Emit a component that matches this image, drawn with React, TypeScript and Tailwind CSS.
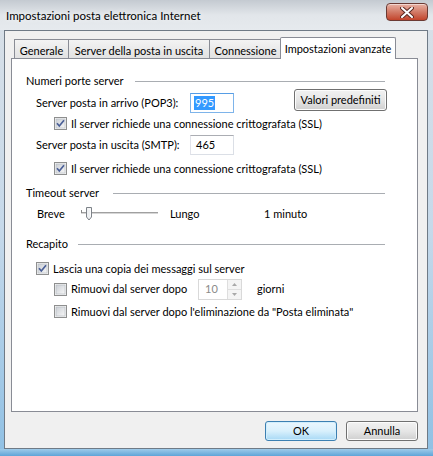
import React from "react";

function Check({ checked = false }: { checked?: boolean }) {
  return (
    <svg width="13" height="13" viewBox="0 0 13 13" className="shrink-0">
      <defs>
        <linearGradient id="cbg" x1="0" y1="0" x2="1" y2="1">
          <stop offset="0" stopColor="#cbcfd5" />
          <stop offset="1" stopColor="#f7f7f7" />
        </linearGradient>
      </defs>
      <rect x="0.5" y="0.5" width="12" height="12" fill="#f4f4f4" stroke="#8e8f8f" />
      <rect x="2" y="2" width="9" height="9" fill="url(#cbg)" stroke="#b3b8bf" strokeWidth="0.6" />
      {checked && (
        <path d="M3 6.3 L5.3 9 L10 3.2" fill="none" stroke="#4a5f97" strokeWidth="1.7" />
      )}
    </svg>
  );
}

function CheckRow({ checked, label, indent }: { checked?: boolean; label: string; indent: string }) {
  return (
    <div className={`flex items-center h-[13px] gap-[4px] ${indent}`}>
      <Check checked={checked} />
      <span className="leading-none whitespace-nowrap">{label}</span>
    </div>
  );
}

function GroupLabel({ text, labelWidth, mt }: { text: string; labelWidth: string; mt: string }) {
  return (
    <div className={`flex items-center h-[16px] pl-[14px] pr-[32px] ${mt}`}>
      <span className={`whitespace-nowrap ${labelWidth}`}>{text}</span>
      <div className="flex-1 h-px bg-[#a9adb2]" />
    </div>
  );
}

function Tab({ label, width, active }: { label: string; width: string; active?: boolean }) {
  if (active) {
    return (
      <div
        className={`${width} h-[22px] -mb-px -mx-[1px] z-10 bg-white border border-b-0 border-[#898c95] rounded-t-[2px] flex justify-center pt-[3px] whitespace-nowrap`}
      >
        {label}
      </div>
    );
  }
  return (
    <div
      className={`${width} h-[19px] border border-b-0 border-[#898c95] bg-gradient-to-b from-[#f3f3f3] to-[#e2e2e2] flex justify-center pt-[3px] -mr-px whitespace-nowrap`}
    >
      {label}
    </div>
  );
}

export default function App() {
  return (
    <div className="w-[433px] h-[456px] overflow-hidden flex flex-col font-['Lato',sans-serif] text-[11px] text-black bg-gradient-to-b from-[#d9e0e7] via-[#c6d9ea] to-[#8fc0e4]">
      {/* title bar */}
      <div className="h-[30px] flex justify-between bg-gradient-to-b from-[#c4cad1] via-[#e2e6ea] to-[#e6eaee]">
        <span className="pl-[6px] pt-[8px] text-[11.5px] leading-[16px] whitespace-nowrap [text-shadow:0_0_6px_#ffffff]">
          Impostazioni posta elettronica Internet
        </span>
        <div className="mt-[3px] mr-[5px] w-[42px] h-[18px] rounded-[4px] border border-[#6b3a33] bg-gradient-to-b from-[#e8b1a4] via-[#d27a66] to-[#c2432a] flex items-center justify-center shadow-[inset_0_1px_0_rgba(255,255,255,0.5)]">
          <svg width="14" height="11" viewBox="0 0 14 11">
            <path d="M2 1 L12 10 M12 1 L2 10" stroke="#5b2a22" strokeWidth="4" strokeLinecap="round" />
            <path d="M2 1 L12 10 M12 1 L2 10" stroke="#ffffff" strokeWidth="2" strokeLinecap="round" />
          </svg>
        </div>
      </div>

      {/* client area */}
      <div className="ml-[4px] mr-[5px] h-[419px] border border-[#6f7a86] bg-[#f0f0f0] pl-[6px] pr-[9px] pt-[6px] flex flex-col">
        <div className="flex items-end h-[21px] pl-[3px]">
          <Tab label="Generale" width="w-[55px]" />
          <Tab label="Server della posta in uscita" width="w-[142px]" />
          <Tab label="Connessione" width="w-[73px]" />
          <Tab label="Impostazioni avanzate" width="w-[116px]" active />
        </div>

        <div className="h-[354px] border border-[#898c95] bg-white flex flex-col">
          <GroupLabel text="Numeri porte server" labelWidth="w-[109px]" mt="mt-[14px]" />

          <div className="flex items-start h-[24px] pl-[24px]">
            <span className="w-[154px] h-[20px] mt-[4px] flex items-center whitespace-nowrap">
              Server posta in arrivo (POP3):
            </span>
            <div className="w-[44px] h-[20px] mt-[4px] border border-[#7eb4ea] border-t-[#569de5] bg-white flex items-center pl-[3px]">
              <span className="bg-[#3399ff] text-white leading-[14px] px-[1px]">995</span>
            </div>
            <button className="ml-[60px] w-[93px] h-[22px] rounded-[3px] border border-[#707070] bg-gradient-to-b from-[#f2f2f2] via-[#e6e6e6] to-[#cfcfcf] shadow-[inset_0_0_0_1px_#fcfcfc] flex items-center justify-center">
              Valori predefiniti
            </button>
          </div>

          <CheckRow checked label="Il server richiede una connessione crittografata (SSL)" indent="ml-[42px] mt-[4px]" />

          <div className="flex items-center h-[20px] pl-[24px] mt-[5px]">
            <span className="w-[154px] whitespace-nowrap">Server posta in uscita (SMTP):</span>
            <div className="w-[44px] h-[20px] border border-[#dbdfe6] border-t-[#abadb3] border-l-[#e2e3ea] bg-white flex items-center pl-[5px]">
              465
            </div>
          </div>

          <CheckRow checked label="Il server richiede una connessione crittografata (SSL)" indent="ml-[42px] mt-[7px]" />

          <GroupLabel text="Timeout server" labelWidth="w-[87px]" mt="mt-[10px]" />

          <div className="flex items-center h-[16px] mt-[5px] pl-[25px]">
            <span className="w-[44px]">Breve</span>
            <svg width="78" height="16" viewBox="0 0 78 16" className="shrink-0">
              <rect x="0" y="6" width="77" height="2" fill="#d6d6d6" />
              <rect x="0" y="6" width="77" height="1" fill="#a0a0a0" />
              <path d="M0.5 4 V7" stroke="#8a8a8a" />
              <path d="M5.5 1.5 H10.5 V11 L8 14 L5.5 11 Z" fill="#eef0f2" stroke="#7d8288" />
              <path d="M6.5 3 H9.5 V10.5" fill="none" stroke="#ffffff" strokeWidth="0.8" />
            </svg>
            <span className="ml-[11px] w-[94px]">Lungo</span>
            <span>1 minuto</span>
          </div>

          <GroupLabel text="Recapito" labelWidth="w-[52px]" mt="mt-[14px]" />

          <CheckRow checked label="Lascia una copia dei messaggi sul server" indent="ml-[24px] mt-[10px]" />

          <div className="flex items-center h-[21px] mt-[4px] pl-[42px]">
            <div className="flex items-center gap-[4px] w-[144px]">
              <Check />
              <span className="whitespace-nowrap">Rimuovi dal server dopo</span>
            </div>
            <div className="w-[44px] h-[21px] border border-[#d9d9d9] bg-white flex items-center">
              <span className="flex-1 pl-[6px] text-[#8a8a8a]">10</span>
              <div className="w-[14px] h-full border-l border-[#dedede] flex flex-col">
                <div className="flex-1 bg-[#f4f4f4] border-b border-[#dedede] flex items-center justify-center">
                  <svg width="5" height="3" viewBox="0 0 5 3"><path d="M0 3 L2.5 0 L5 3 Z" fill="#a8a8a8" /></svg>
                </div>
                <div className="flex-1 bg-[#f4f4f4] flex items-center justify-center">
                  <svg width="5" height="3" viewBox="0 0 5 3"><path d="M0 0 L2.5 3 L5 0 Z" fill="#a8a8a8" /></svg>
                </div>
              </div>
            </div>
            <span className="ml-[15px]">giorni</span>
          </div>

          <CheckRow label={"Rimuovi dal server dopo l'eliminazione da \"Posta eliminata\""} indent="ml-[42px] mt-[5px]" />
        </div>

        <div className="flex justify-end gap-[9px] mt-[9px]">
          <button className="w-[72px] h-[20px] rounded-[3px] border border-[#3c7fb1] bg-gradient-to-b from-[#eaf6fd] via-[#d9f0fc] to-[#a7d9f5] shadow-[inset_0_0_0_1px_#d1eefc] flex items-center justify-center">
            OK
          </button>
          <button className="w-[72px] h-[20px] rounded-[3px] border border-[#707070] bg-gradient-to-b from-[#f2f2f2] via-[#e6e6e6] to-[#cfcfcf] shadow-[inset_0_0_0_1px_#fcfcfc] flex items-center justify-center">
            Annulla
          </button>
        </div>
      </div>

      <div className="flex-1 bg-gradient-to-b from-[#9fcbe9] to-[#5ea4d8]" />
    </div>
  );
}
